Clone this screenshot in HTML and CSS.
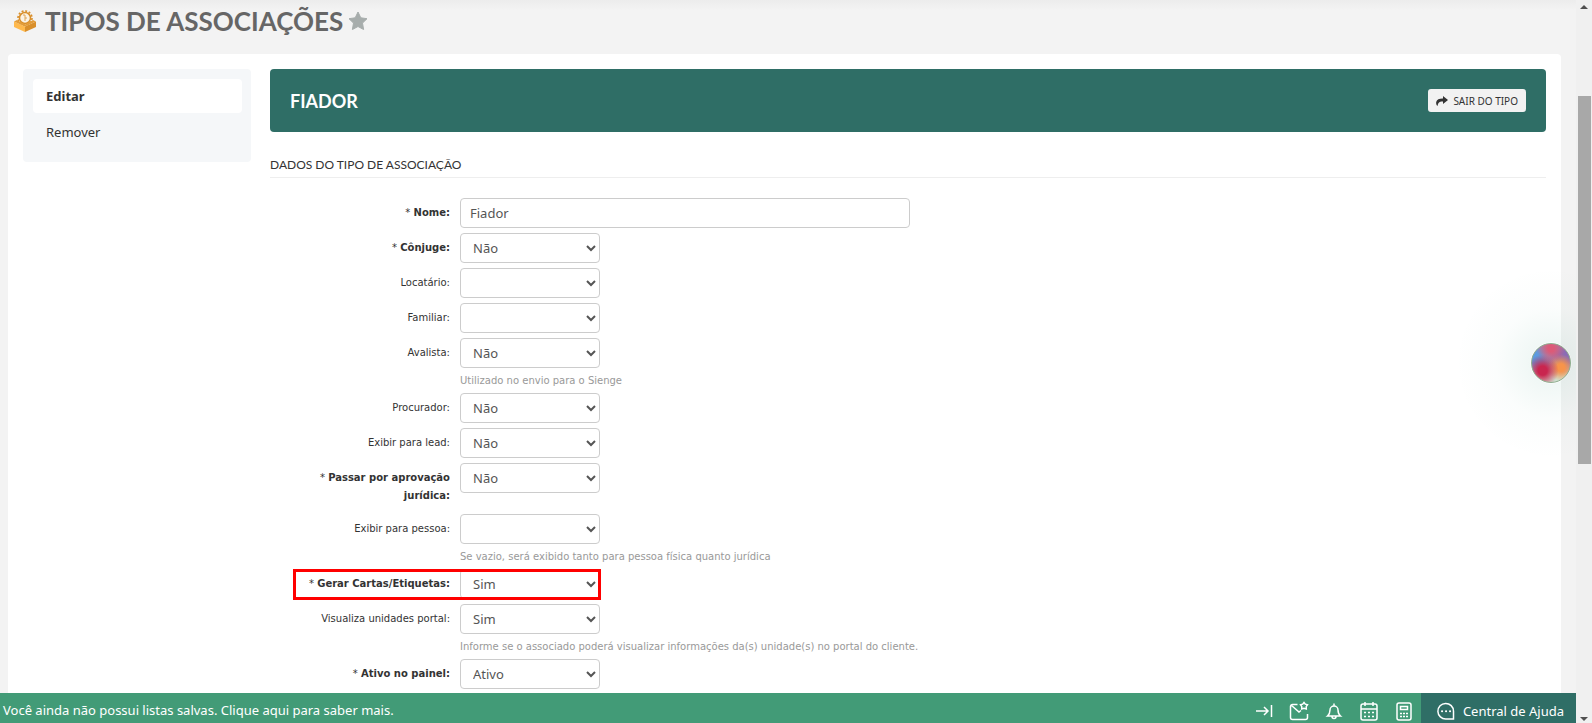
FILE: index.html
```
<!DOCTYPE html>
<html lang="pt-BR">
<head>
<meta charset="UTF-8" />
<meta name="viewport" content="width=device-width, initial-scale=1" />
<title>Tipos de Associações</title>
<link rel="stylesheet" href="styles.css">
</head>
<body>
    <div class="viewport">
        <header class="page-title">
            <svg class="title-icon" viewBox="0 0 22 22" aria-hidden="true">
                <circle cx="11" cy="8" r="5.500" fill="#fbf3e6" stroke="#d98f2b" stroke-width="1.500" />
                <circle cx="11" cy="8" r="7" fill="none" stroke="#d98f2b" stroke-width="1.600" stroke-dasharray="2 1.660" />
                <path d="M9 5h2v6M11 8h2" fill="none" stroke="#e0a658" />
                <path d="M0 11.500l11 5V22L0 17z" fill="#ffb94d" />
                <path d="M22 11.500l-11 5V22l11-5z" fill="#d98f2b" />
                <path d="M0 11.500l3-1.500 8 4.500 8-4.500 3 1.500-11 5z" fill="#e39c38" />
            </svg>
            <h1>TIPOS DE ASSOCIAÇÕES</h1>
            <button class="star" type="button" aria-label="Favoritar">
                <svg viewBox="0 0 20 20"><path d="M10 1l2.800 5.800 6.200.9-4.500 4.400 1.100 6.400L10 15.500l-5.600 3 1.100-6.400L1 7.700l6.200-.9z" fill="#a7adac" stroke="#a7adac" stroke-linejoin="round" /></svg>
            </button>
        </header>

        <div class="panel">
            <nav class="sidebar">
                <a class="active" href="#">Editar</a>
                <a href="#">Remover</a>
            </nav>

            <main class="content">
                <div class="banner">
                    <h2>FIADOR</h2>
                    <button class="btn-exit" type="button">
                        <svg viewBox="0 0 12 10" aria-hidden="true"><path d="M7 0l5 4-5 4V5.600C4 5.400 2.200 6 1.600 10 .2 9 0 7.500.2 6 .7 3.300 3.500 2.300 7 2.400z" fill="#333" /></svg>
                        SAIR DO TIPO
                    </button>
                </div>

                <form>
                    <h3>DADOS DO TIPO DE ASSOCIAÇÃO</h3>

                    <div class="row">
                        <label class="required" for="nome">Nome:</label>
                        <div class="field"><input type="text" id="nome" value="Fiador" /></div>
                    </div>
                    <div class="row">
                        <label class="required" for="conjuge">Cônjuge:</label>
                        <div class="field"><select id="conjuge"><option>Não</option><option>Sim</option></select></div>
                    </div>
                    <div class="row">
                        <label for="locatario">Locatário:</label>
                        <div class="field"><select id="locatario"><option></option><option>Não</option><option>Sim</option></select></div>
                    </div>
                    <div class="row">
                        <label for="familiar">Familiar:</label>
                        <div class="field"><select id="familiar"><option></option><option>Não</option><option>Sim</option></select></div>
                    </div>
                    <div class="row">
                        <label for="avalista">Avalista:</label>
                        <div class="field">
                            <select id="avalista"><option>Não</option><option>Sim</option></select>
                            <p class="hint">Utilizado no envio para o Sienge</p>
                        </div>
                    </div>
                    <div class="row">
                        <label for="procurador">Procurador:</label>
                        <div class="field"><select id="procurador"><option>Não</option><option>Sim</option></select></div>
                    </div>
                    <div class="row">
                        <label for="lead">Exibir para lead:</label>
                        <div class="field"><select id="lead"><option>Não</option><option>Sim</option></select></div>
                    </div>
                    <div class="row">
                        <label class="required" for="aprovacao">Passar por aprovação jurídica:</label>
                        <div class="field"><select id="aprovacao"><option>Não</option><option>Sim</option></select></div>
                    </div>
                    <div class="row">
                        <label for="pessoa">Exibir para pessoa:</label>
                        <div class="field">
                            <select id="pessoa"><option></option><option>Física</option><option>Jurídica</option></select>
                            <p class="hint">Se vazio, será exibido tanto para pessoa física quanto jurídica</p>
                        </div>
                    </div>
                    <div class="row highlight">
                        <label class="required" for="cartas">Gerar Cartas/Etiquetas:</label>
                        <div class="field"><select id="cartas"><option>Sim</option><option>Não</option></select></div>
                    </div>
                    <div class="row">
                        <label for="portal">Visualiza unidades portal:</label>
                        <div class="field">
                            <select id="portal"><option>Sim</option><option>Não</option></select>
                            <p class="hint">Informe se o associado poderá visualizar informações da(s) unidade(s) no portal do cliente.</p>
                        </div>
                    </div>
                    <div class="row">
                        <label class="required" for="ativo">Ativo no painel:</label>
                        <div class="field"><select id="ativo"><option>Ativo</option><option>Inativo</option></select></div>
                    </div>
                </form>
            </main>
        </div>

        <button class="assistant" type="button" aria-label="Assistente"></button>

        <footer class="footer">
            <a class="lists" href="#">Você ainda não possui listas salvas. Clique aqui para saber mais.</a>
            <div class="tools">
                <button type="button" aria-label="Recolher">
                    <svg viewBox="0 0 20 20"><path d="M2 10h12M10 6l4 4-4 4M17.500 4v12" /></svg>
                </button>
                <button type="button" aria-label="Mensagens">
                    <svg viewBox="0 0 20 20"><path d="M8.500 3.500h-5a2 2 0 0 0-2 2v11a2 2 0 0 0 2 2h13a2 2 0 0 0 2-2V13M2 4l8 7 2-1.500M15 1.500l1.300 1.700 2.200.6-1.300 1.900.1 2.300-2.300-.7-2.300.7.1-2.300-1.300-1.900 2.200-.6z" /></svg>
                </button>
                <button type="button" aria-label="Notificações">
                    <svg viewBox="0 0 20 20"><path d="M10 2.500v2M3.500 15h13c-1.800-1.500-2.500-3-2.500-6a4 4 0 0 0-8 0c0 3-.7 4.500-2.500 6zM8 15.500a2 2 0 0 0 4 0" /></svg>
                </button>
                <button type="button" aria-label="Agenda">
                    <svg viewBox="0 0 20 20"><rect x="2" y="3" width="16" height="16" rx="2" /><path d="M2 8h16M6 1v4M14 1v4" /><path stroke-dasharray="2 2" d="M5 11.500h11M5 15.500h11" /></svg>
                </button>
                <button type="button" aria-label="Calculadora">
                    <svg viewBox="0 0 20 20"><rect x="3" y="2" width="14" height="17" rx="2" /><path d="M6.500 5.500h7v3h-7z" /><path stroke-dasharray="2 1" d="M6 12.500h9M6 15.500h9" /></svg>
                </button>
            </div>
            <button class="help" type="button">
                <svg viewBox="0 0 20 20" aria-hidden="true"><path d="M17.500 18H10a7.800 7.800 0 1 1 7.500-7.800z" /><path class="dots" d="M6 10.200h.1M10 10.200h.1M14 10.200h.1" /></svg>
                Central de Ajuda
            </button>
        </footer>
    </div>

    <div class="scrollbar" aria-hidden="true">
        <span class="arrow up"></span>
        <span class="thumb"></span>
        <span class="arrow down"></span>
    </div>
</body>
</html>
```
FILE: styles.css
```
/* General Reset */
*,
*::before,
*::after {
    margin: 0;
    padding: 0;
    box-sizing: border-box;
}

body {
    display: flex;
    height: 100vh;
    overflow: hidden;
    background-color: #f3f3f3;
    color: #333;
    font-family: "DejaVu Sans", Verdana, sans-serif;
    font-size: 10px;
    line-height: 18px;
}

button,
input,
select {
    font-family: "Noto Sans", Tahoma, sans-serif;
}

button {
    border: none;
    background: none;
    cursor: pointer;
}

a {
    color: inherit;
    text-decoration: none;
}

.viewport {
    position: relative;
    display: flex;
    flex-direction: column;
    flex: 1;
    min-width: 0;
}

/* Page title */
.page-title {
    display: flex;
    align-items: center;
    flex: none;
    height: 54px;
    padding: 0 14px 12px;
    background: linear-gradient(#ececec, #f3f3f3 10px);
}

.page-title h1 {
    margin: 0 5px 0 9px;
    color: #666;
    font: bold 26px/36px Lato, sans-serif;
}

.title-icon {
    width: 22px;
    height: 22px;
}

.star svg {
    display: block;
    width: 20px;
    height: 20px;
}

/* White panel */
.panel {
    display: flex;
    align-items: flex-start;
    flex: 1;
    gap: 19px;
    min-height: 0;
    margin: 0 15px 0 8px;
    padding: 15px;
    overflow: hidden;
    border-radius: 4px 4px 0 0;
    background-color: #fff;
}

.sidebar {
    flex: none;
    width: 228px;
    padding: 10px 9px 11px 10px;
    border-radius: 4px;
    background-color: #f5f7f9;
    font: 13px/34px "Noto Sans", sans-serif;
}

.sidebar a {
    display: block;
    margin-bottom: 2px;
    padding: 0 13px;
    border-radius: 4px;
}

.sidebar .active {
    background-color: #fff;
    font-weight: bold;
}

.content {
    flex: 1;
    min-width: 0;
}

.banner {
    display: flex;
    align-items: center;
    justify-content: space-between;
    height: 63px;
    padding: 0 20px;
    border-radius: 4px;
    background-color: #2f6e66;
}

.banner h2 {
    color: #fff;
    font: bold 18px/24px Lato, sans-serif;
}

.btn-exit {
    display: flex;
    align-items: center;
    gap: 5px;
    height: 23px;
    padding: 0 8px;
    border-radius: 3px;
    background-color: #f2f2f2;
    color: #333;
    font-size: 10px;
}

.btn-exit svg {
    width: 12px;
    height: 10px;
}

/* Form */
form h3 {
    margin: 23px 0 20px;
    padding-bottom: 3px;
    border-bottom: 1px solid #eee;
    font: 12px/19px Lato, sans-serif;
}

.row {
    position: relative;
    display: flex;
    align-items: flex-start;
    gap: 10px;
    margin-bottom: 5px;
}

.row label {
    flex: none;
    width: 180px;
    margin-bottom: 4px;
    padding: 6px 0 0 30px;
    text-align: right;
}

.row .required {
    font-weight: bold;
}

.required::before {
    content: "* ";
    font-weight: normal;
}

.field {
    flex: 1;
}

.field input,
.field select {
    display: block;
    height: 30px;
    border: 1px solid #ccc;
    border-radius: 4px;
    background-color: #fff;
    color: #555;
    font-size: 13px;
}

.field input {
    width: 450px;
    padding: 0 9px;
}

.field select {
    width: 140px;
    padding: 0 8px;
}

.hint {
    height: 20px;
    padding-top: 4px;
    color: #999;
}

/* Red frame round the label and its select */
.highlight::after {
    content: "";
    position: absolute;
    top: 0;
    left: 23px;
    width: 308px;
    height: 31px;
    border: 3px solid #f00;
    pointer-events: none;
}

/* Floating assistant */
.assistant {
    position: absolute;
    top: 343px;
    right: 5px;
    z-index: 1;
    width: 40px;
    height: 40px;
    border: 1px solid #8fae8f;
    border-radius: 50%;
    background:
        radial-gradient(circle at 50% 12%, #dc5a78 8%, transparent 38%),
        radial-gradient(circle at 28% 70%, #c9264f 12%, transparent 42%),
        radial-gradient(circle at 76% 62%, #f7944a 10%, transparent 36%),
        radial-gradient(circle at 14% 38%, #5b9be0 12%, transparent 42%),
        radial-gradient(circle at 86% 32%, #8a6cb5 12%, transparent 42%),
        linear-gradient(#a58fa8 40%, #cfe0d0 85%);
}

.assistant::before {
    content: "";
    position: absolute;
    inset: -80px -6px -80px -80px;
    background: radial-gradient(circle at 99px 99px, transparent 20px, rgba(47, 150, 120, 0.07) 21px, rgba(47, 150, 120, 0.02) 55px, transparent 96px);
    pointer-events: none;
}

/* Footer bar */
.footer {
    display: flex;
    align-items: center;
    flex: none;
    height: 30px;
    background-color: #429b77;
    color: #fff;
    font: 13px/34px "Noto Sans", sans-serif;
}

.lists {
    flex: 1;
    padding: 4px 3px 0;
}

.tools {
    display: flex;
    gap: 15px;
    padding: 5px 7px 0 0;
}

.footer svg {
    display: block;
    width: 20px;
    height: 20px;
    fill: none;
    stroke: #fff;
    stroke-width: 1.5px;
}

.footer .dots {
    stroke-width: 2px;
    stroke-linecap: round;
}

.help {
    display: flex;
    align-items: center;
    gap: 7px;
    height: 30px;
    padding: 5px 12px 0 15px;
    background-color: #2f6e66;
    color: #fff;
    font-size: 13px;
}

/* Scrollbar */
.scrollbar {
    display: flex;
    flex-direction: column;
    align-items: center;
    flex: none;
    width: 16px;
    padding: 5px 0 2px;
    background-color: #f0f0f0;
}

.thumb {
    width: 13px;
    height: 51vh;
    margin: 12vh 0 auto;
    background-color: #a8a8a8;
}

.arrow {
    border: 4px solid transparent;
}

.up {
    border-top: none;
    border-bottom-color: #505050;
}

.down {
    border-bottom: none;
    border-top-color: #505050;
}
```
